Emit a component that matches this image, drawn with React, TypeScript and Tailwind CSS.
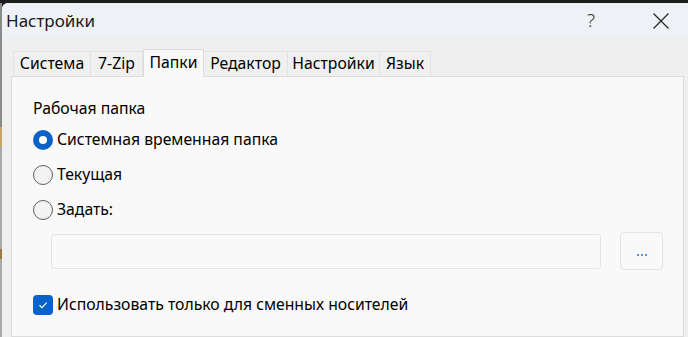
const tabs = [
  { label: "Система", w: "w-[78px]" },
  { label: "7-Zip", w: "w-[53px]" },
  { label: "Папки", w: "w-[61px]", active: true },
  { label: "Редактор", w: "w-[85px]" },
  { label: "Настройки", w: "w-[93px]" },
  { label: "Язык", w: "w-[52px]" },
];

function Radio({ checked, label }: { checked?: boolean; label: string }) {
  return (
    <div className="flex h-[20px] items-center">
      {checked ? (
        <span className="flex h-[20px] w-[20px] items-center justify-center rounded-full bg-[#0a62c9]">
          <span className="h-[8px] w-[8px] rounded-full bg-white" />
        </span>
      ) : (
        <span className="h-[20px] w-[20px] rounded-full border border-[#5e5e5e] bg-[#f3f3f3]" />
      )}
      <span className="ml-[4px]">{label}</span>
    </div>
  );
}

export default function App() {
  return (
    <div className="flex h-[337px] w-[688px] flex-col overflow-hidden bg-[#1c1c1c] font-['Segoe_UI','Noto_Sans',sans-serif] text-[15.75px] text-black">
      <div className="h-[3px] shrink-0" />
      <div className="flex min-h-0 flex-1">
        {/* bit of the window behind */}
        <div className="flex w-[2px] shrink-0 flex-col bg-[#a9a9a9]">
          <div className="h-[124px] bg-[#8a8a8a]" />
          <div className="h-[20px] bg-[#c6a46a]" />
          <div className="h-[102px]" />
          <div className="h-[10px] bg-[#9a7a4a]" />
        </div>

        <div className="flex min-w-0 flex-1 flex-col overflow-hidden rounded-tl-[6px] bg-[#efefef]">
          <div className="flex h-[35px] shrink-0 items-center bg-[#eef2f6] pl-[4px]">
            <span className="text-[17px] text-[#1a1a1a]">Настройки</span>
            <span className="ml-auto mr-[58px] text-[19px] font-light text-[#333]">?</span>
            <svg viewBox="0 0 16 16" className="mr-[19px] h-[16px] w-[16px]" fill="none" stroke="#222" strokeWidth="1.2">
              <path d="M0.5 0.5 L15.5 15.5 M15.5 0.5 L0.5 15.5" />
            </svg>
          </div>

          <div className="flex min-h-0 flex-1 flex-col pl-[9px] pr-[4px] pt-[11px]">
            <div className="flex h-[27px] shrink-0 items-end pl-[2px]">
              {tabs.map((t) =>
                t.active ? (
                  <div
                    key={t.label}
                    className={`${t.w} relative z-10 -mb-px flex h-[28px] items-start justify-center border border-b-0 border-[#dcdcdc] bg-[#f9f9f9] pt-[1px]`}
                  >
                    {t.label}
                  </div>
                ) : (
                  <div
                    key={t.label}
                    className={`${t.w} -ml-px flex h-[25px] items-center justify-center border border-b-0 border-[#e2e2e2] bg-[#f0f0f0] first:ml-0`}
                  >
                    {t.label}
                  </div>
                )
              )}
            </div>

            <div className="flex min-h-0 flex-1 flex-col border border-[#dcdcdc] bg-[#f9f9f9] pl-[21px] pr-[20px] pt-[20px]">
              <div className="h-[22px] leading-[22px]">Рабочая папка</div>
              <div className="mt-[11px] flex flex-col gap-[15px]">
                <Radio checked label="Системная временная папка" />
                <Radio label="Текущая" />
                <Radio label="Задать:" />
              </div>
              <div className="mt-[12px] flex items-center pl-[18px]">
                <div className="h-[35px] flex-1 rounded-[3px] border border-[#e3e3e3] bg-[#f9f9f9]" />
                <div className="ml-[19px] flex h-[38px] w-[43px] items-center justify-center gap-[2px] rounded-[4px] border border-[#e3e3e3] bg-[#f9f9f9] pt-[8px]">
                  <span className="h-[1.5px] w-[2px] bg-[#5b95d6]" />
                  <span className="h-[1.5px] w-[2px] bg-[#5b95d6]" />
                  <span className="h-[1.5px] w-[2px] bg-[#5b95d6]" />
                </div>
              </div>
              <div className="mt-[25px] flex h-[20px] items-center">
                <span className="flex h-[20px] w-[20px] items-center justify-center rounded-[4px] bg-[#0a62c9]">
                  <svg viewBox="0 0 12 12" className="h-[12px] w-[12px]" fill="none" stroke="white" strokeWidth="1.2">
                    <path d="M2.5 6.3 L5 8.6 L9.6 3.6" />
                  </svg>
                </span>
                <span className="ml-[4px]">Использовать только для сменных носителей</span>
              </div>
            </div>
          </div>
        </div>
      </div>
    </div>
  );
}
